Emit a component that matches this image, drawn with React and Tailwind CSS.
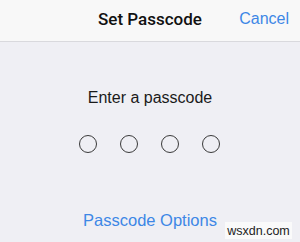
export default function App() {
  return (
    <div className="relative w-[300px] h-[242px] overflow-hidden bg-[#efeff4] flex flex-col" style={{ fontFamily: '"Liberation Sans", Arial, sans-serif' }}>
      <div className="h-[42px] shrink-0 bg-[#f8f8f8] border-b border-[#d9d9dd] relative flex items-center justify-center">
        <span className="text-[17px] leading-[20px] font-medium text-[#111] -mt-[4px]" style={{ fontFamily: 'Roboto, sans-serif' }}>Set Passcode</span>
        <span className="absolute right-[11px] top-[9px] text-[16px] leading-[20px] text-[#3d87e6]">Cancel</span>
      </div>
      <div className="flex flex-col items-center">
        <div className="mt-[46px] text-[16px] leading-[19px] text-[#1a1a1a]">Enter a passcode</div>
        <div className="mt-[28px] flex gap-[23px] -ml-[1px]">
          <div className="w-[18px] h-[18px] rounded-full border-[1.3px] border-[#3a3a3a]" />
          <div className="w-[18px] h-[18px] rounded-full border-[1.3px] border-[#3a3a3a]" />
          <div className="w-[18px] h-[18px] rounded-full border-[1.3px] border-[#3a3a3a]" />
          <div className="w-[18px] h-[18px] rounded-full border-[1.3px] border-[#3a3a3a]" />
        </div>
        <div className="mt-[57px] text-[16.5px] leading-[20px] text-[#3d87e6]">Passcode Options</div>
      </div>
      <div className="absolute right-[8px] bottom-[3px] w-[67px] h-[17px] bg-[#fafafa] flex items-center justify-center text-[12.5px] leading-[14px] text-[#222]">wsxdn.com</div>
    </div>
  );
}
